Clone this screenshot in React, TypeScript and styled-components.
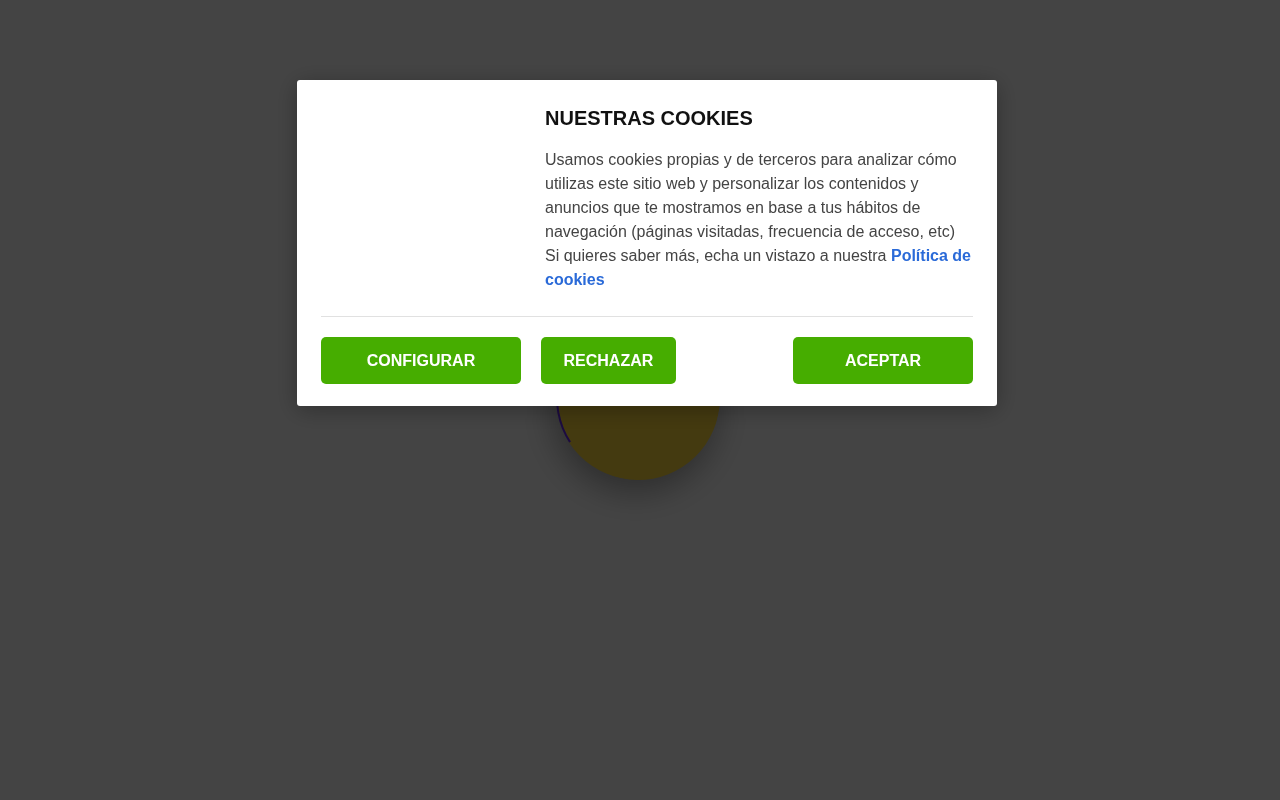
import React from 'react';
import styled, { createGlobalStyle } from 'styled-components';

const GlobalStyle = createGlobalStyle`
  html, body {
    margin: 0;
    padding: 0;
    background: #ffffff;
    font-family: "Liberation Sans", Arial, sans-serif;
  }
  * { box-sizing: border-box; }
`;

const Page = styled.main`
  width: 100%;
  height: 800px;
  padding: 316px 0 0 556px;
`;

const Loader = styled.div`
  width: 164px;
  height: 164px;
  border-radius: 50%;
  background: #ffd93c;
  border: 2px solid transparent;
  border-left-color: #6a2cf0;
  transform: rotate(12deg);
  box-shadow: 0 12px 34px rgba(0, 0, 0, 0.35);
`;

const Overlay = styled.div`
  position: fixed;
  inset: 0;
  background: rgba(0, 0, 0, 0.733);
  display: flex;
  align-items: flex-start;
  padding: 80px 0 0 297px;
`;

const Modal = styled.section`
  width: 700px;
  background: #ffffff;
  border-radius: 3px;
  padding: 26px 24px 22px;
  box-shadow: 0 4px 24px rgba(0, 0, 0, 0.3);
`;

const Top = styled.div`
  display: flex;
  gap: 24px;
  padding-bottom: 24px;
  border-bottom: 1px solid #e1e1e1;
`;

const LogoSlot = styled.div`
  width: 200px;
  flex-shrink: 0;
`;

const Content = styled.div`
  flex: 1;
`;

const Title = styled.h2`
  margin: 0 0 18px;
  font-size: 20px;
  line-height: 24px;
  font-weight: 700;
  color: #111111;
`;

const Text = styled.p`
  margin: 0;
  font-size: 16px;
  line-height: 24px;
  color: #444444;
`;

const Link = styled.a`
  color: #2a6ad8;
  font-weight: 700;
  text-decoration: none;
`;

const Actions = styled.div`
  display: flex;
  gap: 20px;
  margin-top: 20px;
`;

const Button = styled.button<{ $width?: number; $push?: boolean }>`
  height: 47px;
  width: ${(p) => (p.$width ? `${p.$width}px` : 'auto')};
  padding: 0 22.5px;
  margin-left: ${(p) => (p.$push ? 'auto' : '0')};
  border: none;
  border-radius: 5px;
  background: #46ad00;
  color: #ffffff;
  font-family: "Liberation Sans", Arial, sans-serif;
  font-size: 16px;
  font-weight: 700;
  text-transform: uppercase;
  cursor: pointer;
`;

export default function App() {
  return (
    <>
      <GlobalStyle />
      <Page>
        <Loader />
      </Page>
      <Overlay>
        <Modal>
          <Top>
            <LogoSlot />
            <Content>
              <Title>NUESTRAS COOKIES</Title>
              <Text>
                Usamos cookies propias y de terceros para analizar cómo utilizas este sitio web y
                personalizar los contenidos y anuncios que te mostramos en base a tus hábitos de
                navegación (páginas visitadas, frecuencia de acceso, etc) Si quieres saber más, echa
                un vistazo a nuestra <Link href="#">Política de cookies</Link>
              </Text>
            </Content>
          </Top>
          <Actions>
            <Button $width={200}>Configurar</Button>
            <Button>Rechazar</Button>
            <Button $width={180} $push>
              Aceptar
            </Button>
          </Actions>
        </Modal>
      </Overlay>
    </>
  );
}
